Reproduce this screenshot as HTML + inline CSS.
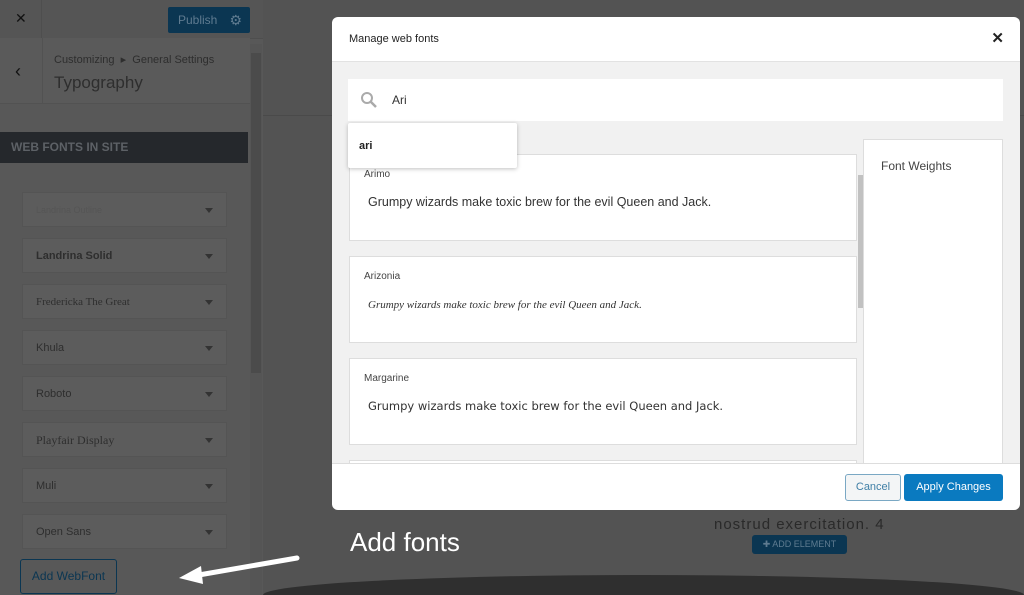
<!DOCTYPE html><html><head><style>
body{margin:0;width:1024px;height:595px;overflow:hidden;background:#535353;font-family:"Liberation Sans",sans-serif;position:relative}
.a{position:absolute}
.fld{position:absolute;left:22px;width:205px;height:35px;background:#5c5c5c;border:1px solid #545454;font-size:11px;color:#2e2e2e;line-height:35px;box-sizing:border-box;padding-left:13px}
.fld:after{content:"";position:absolute;right:13px;top:15px;border-left:4px solid transparent;border-right:4px solid transparent;border-top:5px solid #333}
.card{position:absolute;left:349px;width:508px;background:#fff;border:1px solid #ddd;box-sizing:border-box}
.card .n{position:absolute;left:14px;top:14px;font-size:10px;color:#444}
.card .t{position:absolute;left:18px;top:40px;font-size:12.5px;color:#333}
</style></head><body>
<div class="a" style="left:0;top:0;width:263px;height:595px;background:#585858"></div>
<div class="a" style="left:0;top:0;width:263px;height:38px;background:#555;border-bottom:1px solid #4e4e4e"></div>
<div class="a" style="left:15px;top:10px;font-size:14px;color:#111">✕</div>
<div class="a" style="left:41px;top:0;width:1px;height:38px;background:#4e4e4e"></div>
<div class="a" style="left:168px;top:7px;width:82px;height:26px;background:#0b3652;border-radius:2px;color:#5f7b90;font-size:12px;line-height:26px"><span style="margin-left:10px">Publish</span><span style="position:absolute;right:8px;font-size:14px">⚙</span></div>
<div class="a" style="left:0;top:38px;width:250px;height:65px;background:#5a5a5a;border-bottom:1px solid #525252"></div>
<div class="a" style="left:42px;top:38px;width:1px;height:65px;background:#525252"></div>
<div class="a" style="left:15px;top:61px;font-size:18px;color:#111">‹</div>
<div class="a" style="left:54px;top:53px;font-size:11px;color:#2e2e2e">Customizing &nbsp;▸&nbsp; General Settings</div>
<div class="a" style="left:54px;top:73px;font-size:17px;color:#2e2e2e">Typography</div>
<div class="a" style="left:250px;top:44px;width:12px;height:551px;background:#555"></div>
<div class="a" style="left:251px;top:53px;width:10px;height:320px;background:#4b4b4b"></div>
<div class="a" style="left:0;top:132px;width:248px;height:31px;background:#25282c;color:#5d6166;font-size:12px;font-weight:bold;line-height:31px;padding-left:11px;box-sizing:border-box">WEB FONTS IN SITE</div>
<div class="fld" style="top:192px;color:#555;font-size:9px">Landrina Outline</div>
<div class="fld" style="top:238px;font-weight:bold">Landrina Solid</div>
<div class="fld" style="top:284px;font-family:'Liberation Serif',serif">Fredericka The Great</div>
<div class="fld" style="top:330px">Khula</div>
<div class="fld" style="top:376px">Roboto</div>
<div class="fld" style="top:422px;font-family:'Liberation Serif',serif;font-size:12px">Playfair Display</div>
<div class="fld" style="top:468px">Muli</div>
<div class="fld" style="top:514px">Open Sans</div>
<div class="a" style="left:20px;top:559px;width:97px;height:35px;border:1px solid #0b3652;border-radius:3px;box-sizing:border-box;color:#0b3652;font-size:12px;line-height:33px;text-align:center">Add WebFont</div>
<div class="a" style="left:263px;top:115px;width:761px;height:1px;background:#4a4a4a"></div>
<div class="a" style="left:263px;top:575px;width:761px;height:20px;background:#2f2f2f;border-radius:50% 50% 0 0/100% 100% 0 0"></div>
<div class="a" style="left:714px;top:516px;font-size:15px;color:#2a2a2a;letter-spacing:1px">nostrud exercitation. 4</div>
<div class="a" style="left:752px;top:535px;width:95px;height:19px;background:#0b3652;border-radius:3px;color:#5f7b90;font-size:9px;line-height:19px;text-align:center">✚ ADD ELEMENT</div>
<div class="a" style="left:350px;top:527px;font-size:26px;color:#fff">Add fonts</div>
<svg class="a" style="left:175px;top:550px" width="130" height="35"><path d="M122 8 L18 26" stroke="#fff" stroke-width="5" stroke-linecap="round"/><path d="M4 28 L26 16 L28 34 Z" fill="#fff"/></svg>
<div class="a" style="left:332px;top:17px;width:688px;height:493px;background:#fff;border-radius:6px;overflow:hidden">
<div class="a" style="left:17px;top:16px;font-size:11px;color:#222">Manage web fonts</div>
<div class="a" style="right:16px;top:12px;font-size:15px;font-weight:bold;color:#222">✕</div>
<div class="a" style="left:0;top:44px;width:688px;height:402px;background:#f1f1f1;border-top:1px solid #e2e2e2"></div>
<div class="a" style="left:0;top:446px;width:688px;height:1px;background:#ddd"></div>
</div>
<div class="a" style="left:348px;top:79px;width:655px;height:42px;background:#fff"></div>
<svg class="a" style="left:360px;top:91px" width="18" height="18"><circle cx="7" cy="7" r="5" stroke="#aaa" stroke-width="2" fill="none"/><path d="M11 11 L16 16" stroke="#aaa" stroke-width="2.5"/></svg>
<div class="a" style="left:392px;top:93px;font-size:12px;color:#333">Ari</div>
<div class="card" style="top:154px;height:87px"><div class="n">Arimo</div><div class="t">Grumpy wizards make toxic brew for the evil Queen and Jack.</div></div>
<div class="card" style="top:256px;height:87px"><div class="n">Arizonia</div><div class="t" style="font-family:'Liberation Serif',serif;font-style:italic;font-size:11px;top:42px">Grumpy wizards make toxic brew for the evil Queen and Jack.</div></div>
<div class="card" style="top:358px;height:87px"><div class="n">Margarine</div><div class="t" style="font-family:'DejaVu Sans',sans-serif;font-size:11.5px">Grumpy wizards make toxic brew for the evil Queen and Jack.</div></div>
<div class="card" style="top:460px;height:3px;border-bottom:none"></div>
<div class="a" style="left:348px;top:123px;width:169px;height:45px;background:#fff;box-shadow:0 1px 4px rgba(0,0,0,.25);border-radius:2px"><div style="margin:17px 0 0 11px;font-size:11px;font-weight:bold;color:#222">ari</div></div>
<div class="a" style="left:858px;top:175px;width:5px;height:133px;background:#c1c1c1"></div>
<div class="a" style="left:863px;top:139px;width:140px;height:324px;background:#fff;border:1px solid #ddd;border-bottom:none;box-sizing:border-box"><div style="margin:19px 0 0 17px;font-size:12px;color:#444">Font Weights</div></div>
<div class="a" style="left:845px;top:474px;width:56px;height:27px;border:1px solid #7aa8c4;background:#f3f5f6;border-radius:3px;box-sizing:border-box;color:#3f7fa6;font-size:11px;line-height:25px;text-align:center">Cancel</div>
<div class="a" style="left:904px;top:474px;width:99px;height:27px;background:#0a7ac0;border-radius:3px;color:#fff;font-size:11px;line-height:27px;text-align:center">Apply Changes</div>
</body></html>
